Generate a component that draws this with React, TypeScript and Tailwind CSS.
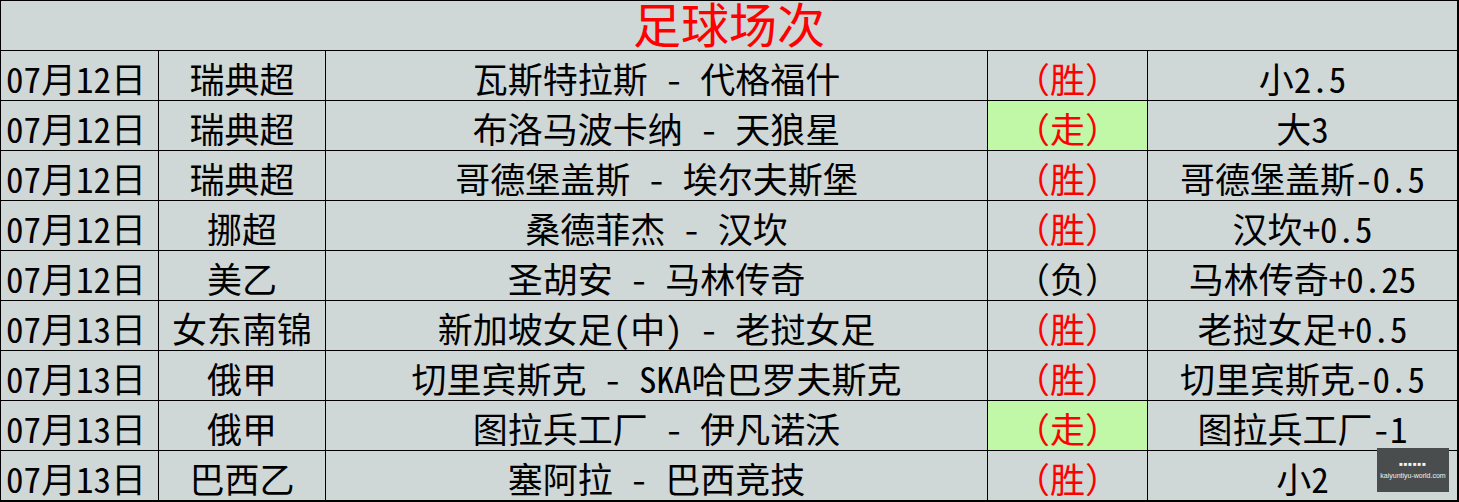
import React from "react";

// Football match list, spreadsheet style

type Match = {
  date: string;
  league: string;
  teams: string;
  result: string;
  pick: string;
  lose?: boolean;
  draw?: boolean;
};

const matches: Match[] = [
  { date: "07月12日", league: "瑞典超", teams: "瓦斯特拉斯 - 代格福什", result: "（胜）", pick: "小2.5" },
  { date: "07月12日", league: "瑞典超", teams: "布洛马波卡纳 - 天狼星", result: "（走）", pick: "大3", draw: true },
  { date: "07月12日", league: "瑞典超", teams: "哥德堡盖斯 - 埃尔夫斯堡", result: "（胜）", pick: "哥德堡盖斯-0.5" },
  { date: "07月12日", league: "挪超", teams: "桑德菲杰 - 汉坎", result: "（胜）", pick: "汉坎+0.5" },
  { date: "07月12日", league: "美乙", teams: "圣胡安 - 马林传奇", result: "（负）", pick: "马林传奇+0.25", lose: true },
  { date: "07月13日", league: "女东南锦", teams: "新加坡女足(中) - 老挝女足", result: "（胜）", pick: "老挝女足+0.5" },
  { date: "07月13日", league: "俄甲", teams: "切里宾斯克 - SKA哈巴罗夫斯克", result: "（胜）", pick: "切里宾斯克-0.5" },
  { date: "07月13日", league: "俄甲", teams: "图拉兵工厂 - 伊凡诺沃", result: "（走）", pick: "图拉兵工厂-1", draw: true },
  { date: "07月13日", league: "巴西乙", teams: "塞阿拉 - 巴西竞技", result: "（胜）", pick: "小2" },
];

const font = { fontFamily: '"Noto Sans Mono CJK SC", "Noto Sans CJK SC", monospace' };

export default function App() {
  return (
    <div
      className="relative w-[1459px] h-[502px] bg-[#cfd7d7] border-l border-t border-r-2 border-b-2 border-black text-black overflow-hidden"
      style={font}
    >
      {/* Title */}
      <div className="h-[50px] border-b border-black flex justify-center text-[48px] leading-[43px] text-[#ff0000]">
        足球场次
      </div>

      {/* Rows */}
      <div className="grid grid-cols-[158px_167px_662px_160px_309px]">
        {matches.map((m, i) => (
          <MatchRow key={i} match={m} last={i === matches.length - 1} />
        ))}
      </div>

      {/* Watermark */}
      <div
        className="absolute left-[1376px] top-[447px] w-[72px] h-[44px] bg-[#4a4d4d] flex flex-col items-center justify-center text-[#f2f2f2] leading-none"
        style={{ fontFamily: '"Liberation Sans", sans-serif' }}
      >
        <span className="text-[6px] tracking-[1px]">■■■■■■</span>
        <span className="text-[7px] mt-[5px]">kaiyuntiyu-world.com</span>
      </div>
    </div>
  );
}

function MatchRow({ match, last }: { match: Match; last: boolean }) {
  const cell = `flex pt-[4px] text-[35px] leading-[45px] whitespace-nowrap ${last ? "h-[49px]" : "h-[50px] border-b border-black"}`;
  return (
    <>
      <div className={`${cell} border-r border-black pl-[5px]`}>{match.date}</div>
      <div className={`${cell} border-r border-black justify-center`}>{match.league}</div>
      <div className={`${cell} border-r border-black justify-center`}>{match.teams}</div>
      <div
        className={`${cell} border-r border-black justify-center ${match.draw ? "bg-[#c0f8a8]" : ""} ${match.lose ? "text-black" : "text-[#ff0000]"}`}
      >
        {match.result}
      </div>
      <div className={`${cell} justify-center`}>{match.pick}</div>
    </>
  );
}
